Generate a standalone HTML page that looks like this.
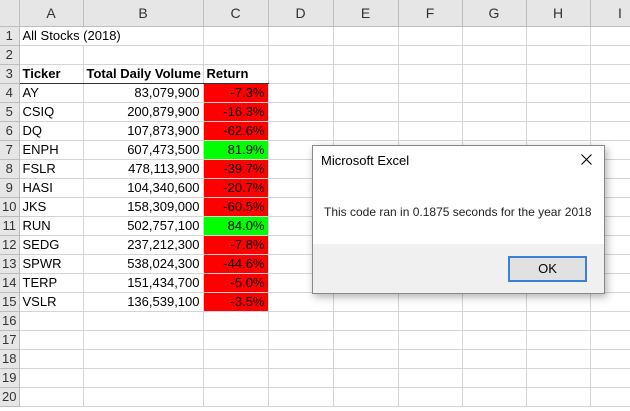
<!DOCTYPE html>
<html><head><style>
body{margin:0;width:630px;height:411px;overflow:hidden;background:#fff;font-family:"Liberation Sans",Arial,sans-serif;font-size:13px;color:#000;position:relative}
table{border-collapse:collapse;table-layout:fixed;position:absolute;left:0;top:0;width:650px}
td{height:18px;border-right:1px solid #d4d4d4;border-bottom:1px solid #d4d4d4;padding:0 3px;white-space:nowrap;overflow:visible;line-height:18px}
tr.h td{height:26px;background:#e6e6e6;text-align:center;color:#333;font-size:14px;border-color:#bdbdbd}
td.r{background:#e6e6e6;text-align:center;color:#333;padding:0;border-color:#bdbdbd;font-size:13px}
.n{text-align:right}
.red{background:#ff0000}
.grn{background:#00ff00}
.b{font-weight:bold}
tr.t td.u{border-bottom:1px solid #333}
#dlg{position:absolute;left:312px;top:145px;width:291px;height:147px;background:#fff;border:1px solid #888;box-shadow:2px 3px 8px rgba(0,0,0,.3)}
#dlg .tt{position:absolute;left:8px;top:7px;font-size:13px}
#dlg .x{position:absolute;right:12px;top:8px}
#dlg .msg{position:absolute;left:11px;top:59px;font-size:12px;color:#222}
#dlg .ft{position:absolute;left:0;right:0;bottom:0;height:49px;background:#f0f0f0}
#dlg .ok{position:absolute;left:195px;top:12px;width:75px;height:22px;border:2px solid #3c7fd8;background:#e1e1e1;text-align:center;line-height:22px;font-size:13px;box-sizing:content-box}
</style></head><body>
<table>
<colgroup><col style="width:19px"><col style="width:64px"><col style="width:120px"><col style="width:65px"><col style="width:65px"><col style="width:65px"><col style="width:64px"><col style="width:64px"><col style="width:64px"><col style="width:60px"></colgroup>
<tr class="h"><td></td><td>A</td><td>B</td><td>C</td><td>D</td><td>E</td><td>F</td><td>G</td><td>H</td><td>I</td></tr>
<tr><td class="r">1</td><td style="border-right:none">All Stocks (2018)</td><td></td><td></td><td></td><td></td><td></td><td></td><td></td><td></td></tr>
<tr><td class="r">2</td><td></td><td></td><td></td><td></td><td></td><td></td><td></td><td></td><td></td></tr>
<tr class="t"><td class="r">3</td><td class="b u">Ticker</td><td class="b u">Total Daily Volume</td><td class="b u">Return</td><td></td><td></td><td></td><td></td><td></td><td></td></tr>
<tr><td class="r">4</td><td>AY</td><td class="n">83,079,900</td><td class="n red">-7.3%</td><td></td><td></td><td></td><td></td><td></td><td></td></tr>
<tr><td class="r">5</td><td>CSIQ</td><td class="n">200,879,900</td><td class="n red">-16.3%</td><td></td><td></td><td></td><td></td><td></td><td></td></tr>
<tr><td class="r">6</td><td>DQ</td><td class="n">107,873,900</td><td class="n red">-62.6%</td><td></td><td></td><td></td><td></td><td></td><td></td></tr>
<tr><td class="r">7</td><td>ENPH</td><td class="n">607,473,500</td><td class="n grn">81.9%</td><td></td><td></td><td></td><td></td><td></td><td></td></tr>
<tr><td class="r">8</td><td>FSLR</td><td class="n">478,113,900</td><td class="n red">-39.7%</td><td></td><td></td><td></td><td></td><td></td><td></td></tr>
<tr><td class="r">9</td><td>HASI</td><td class="n">104,340,600</td><td class="n red">-20.7%</td><td></td><td></td><td></td><td></td><td></td><td></td></tr>
<tr><td class="r">10</td><td>JKS</td><td class="n">158,309,000</td><td class="n red">-60.5%</td><td></td><td></td><td></td><td></td><td></td><td></td></tr>
<tr><td class="r">11</td><td>RUN</td><td class="n">502,757,100</td><td class="n grn">84.0%</td><td></td><td></td><td></td><td></td><td></td><td></td></tr>
<tr><td class="r">12</td><td>SEDG</td><td class="n">237,212,300</td><td class="n red">-7.8%</td><td></td><td></td><td></td><td></td><td></td><td></td></tr>
<tr><td class="r">13</td><td>SPWR</td><td class="n">538,024,300</td><td class="n red">-44.6%</td><td></td><td></td><td></td><td></td><td></td><td></td></tr>
<tr><td class="r">14</td><td>TERP</td><td class="n">151,434,700</td><td class="n red">-5.0%</td><td></td><td></td><td></td><td></td><td></td><td></td></tr>
<tr><td class="r">15</td><td>VSLR</td><td class="n">136,539,100</td><td class="n red">-3.5%</td><td></td><td></td><td></td><td></td><td></td><td></td></tr>
<tr><td class="r">16</td><td></td><td></td><td></td><td></td><td></td><td></td><td></td><td></td><td></td></tr>
<tr><td class="r">17</td><td></td><td></td><td></td><td></td><td></td><td></td><td></td><td></td><td></td></tr>
<tr><td class="r">18</td><td></td><td></td><td></td><td></td><td></td><td></td><td></td><td></td><td></td></tr>
<tr><td class="r">19</td><td></td><td></td><td></td><td></td><td></td><td></td><td></td><td></td><td></td></tr>
<tr><td class="r">20</td><td></td><td></td><td></td><td></td><td></td><td></td><td></td><td></td><td></td></tr>
</table>
<div id="dlg">
<div class="tt">Microsoft Excel</div>
<svg class="x" width="11" height="11" viewBox="0 0 11 11"><path d="M0.5 0.5L10.5 10.5M10.5 0.5L0.5 10.5" stroke="#000" stroke-width="1.1"/></svg>
<div class="msg">This code ran in 0.1875 seconds for the year 2018</div>
<div class="ft"><div class="ok">OK</div></div>
</div>
</body></html>
